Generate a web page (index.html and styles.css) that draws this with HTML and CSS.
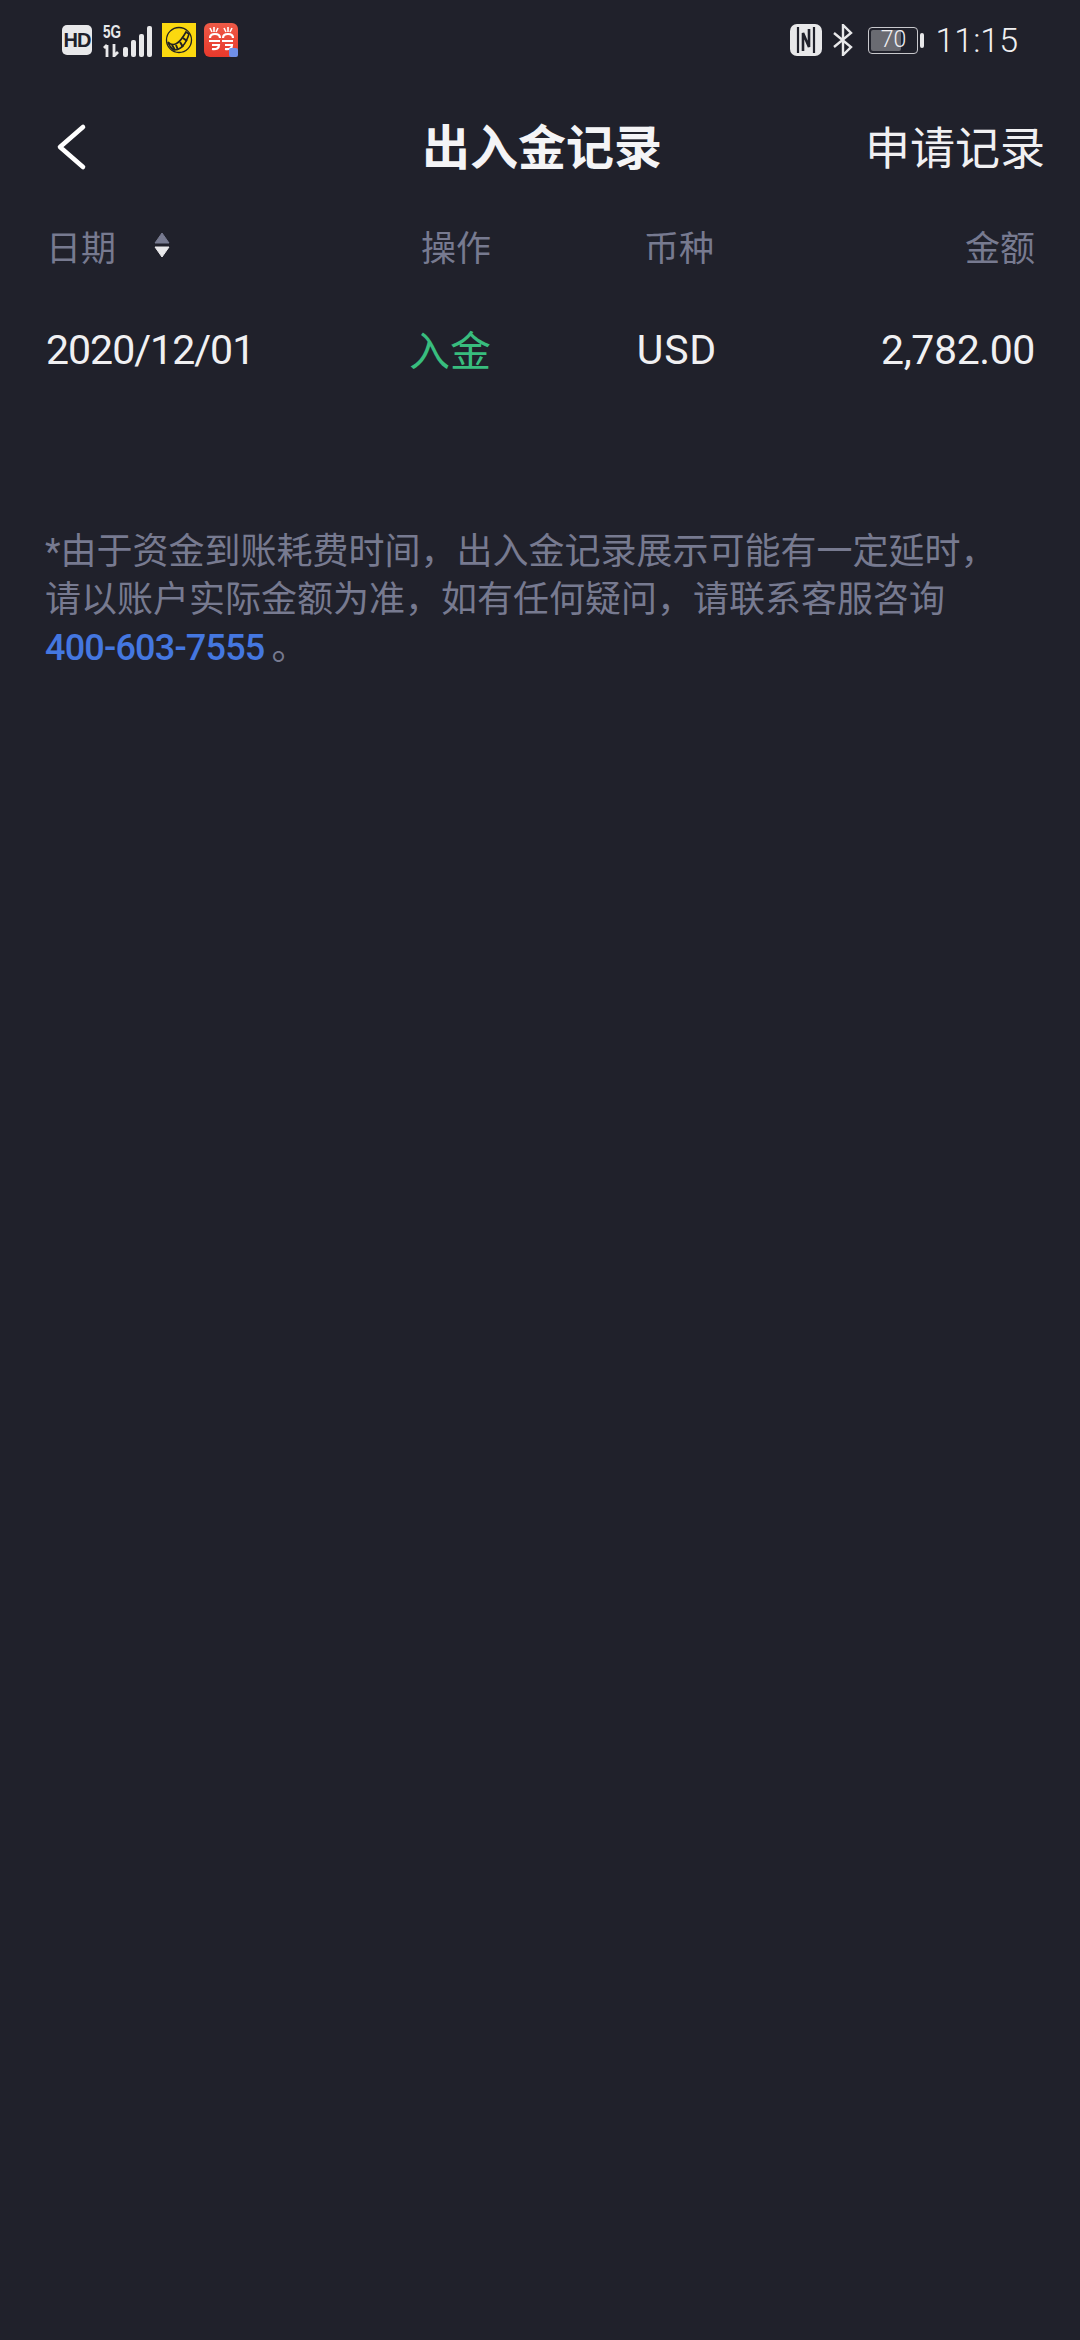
FILE: index.html
```html
<!DOCTYPE html>
<html lang="zh-CN">
<head>
    <meta charset="UTF-8">
    <meta name="viewport" content="width=device-width, initial-scale=1.0">
    <title>出入金记录</title>
    <link rel="stylesheet" href="styles.css">
</head>
<body>
    <div class="status-bar">
        <div class="status-left">
            <span class="hd-badge">HD</span>
            <div class="signal">
                <div class="signal-labels">
                    <span class="net-label">5G</span>
                    <svg class="net-arrows" width="20" height="13" viewBox="0 0 20 13">
                        <path d="M4 1 V13 M1 4 L4 1 M11 0 V12 L15 8" fill="none" stroke="#e8e8ea" stroke-width="2.8"/>
                    </svg>
                </div>
                <div class="signal-bars">
                    <span class="bar bar-1"></span>
                    <span class="bar bar-2"></span>
                    <span class="bar bar-3"></span>
                    <span class="bar bar-4"></span>
                </div>
            </div>
            <svg class="app-icon" width="34" height="34" viewBox="0 0 34 34">
                <rect width="34" height="34" fill="#fbd80f"/>
                <circle cx="17" cy="17" r="12.5" fill="none" stroke="#222" stroke-width="1.3"/>
                <path d="M6 19 Q14 27 24 9 L27 11 Q22 27 12 27 Q8 25 6 19 Z" fill="none" stroke="#222" stroke-width="1.6"/>
                <path d="M10 22 L13 27 M14 22 L16 27 M18 19 L21 24 M21 15 L25 18" stroke="#222" stroke-width="2"/>
            </svg>
            <svg class="app-icon" width="34" height="34" viewBox="0 0 34 34">
                <defs>
                    <linearGradient id="redGrad" x1="0" y1="0" x2="0" y2="1">
                        <stop offset="0" stop-color="#ee5a47"/>
                        <stop offset="1" stop-color="#e8392c"/>
                    </linearGradient>
                </defs>
                <rect width="34" height="34" rx="6" fill="url(#redGrad)"/>
                <path d="M6 15 Q6 11 11 11 Q16 11 16 15 M5 18 H16 M8 22 H15 Q15 27 8 26 M19 15 Q19 11 24 11 Q29 11 29 15 M18 18 H29 M21 22 H28 Q28 27 21 26" fill="none" stroke="#fff" stroke-width="2.2"/>
                <path d="M6 5 L8 9 M10 4 L10 9 M14 5 L12 9 M20 5 L22 9 M24 4 L24 9 M28 5 L26 9" stroke="#fff" stroke-width="1.6"/>
                <rect x="25" y="25" width="9" height="9" rx="2" fill="#6f8fe8"/>
            </svg>
        </div>
        <div class="status-right">
            <svg class="nfc" width="32" height="32" viewBox="0 0 32 32">
                <rect width="32" height="32" rx="7" fill="#e8e8ea"/>
                <path d="M8 3 V29 M24 3 V29" fill="none" stroke="#20212b" stroke-width="2.2"/>
                <path d="M13 27 V9 L19 23 V5" fill="none" stroke="#20212b" stroke-width="2.6"/>
            </svg>
            <svg class="bluetooth" width="20" height="32" viewBox="0 0 20 32">
                <path d="M1 9 L18 23 L10 31 V1 L18 9 L1 23" fill="none" stroke="#e8e8ea" stroke-width="2.4"/>
            </svg>
            <div class="battery">
                <div class="battery-body">
                    <span class="battery-fill"></span>
                    <span class="battery-num">70</span>
                </div>
                <span class="battery-nub"></span>
            </div>
            <span class="clock">11:15</span>
        </div>
    </div>

    <div class="nav-bar">
        <svg class="back-icon" width="32" height="48" viewBox="0 0 32 48">
            <path d="M28 4 L5 24 L28 44" fill="none" stroke="#fff" stroke-width="4.6" stroke-linecap="round" stroke-linejoin="round"/>
        </svg>
        <div class="nav-title">出入金记录</div>
        <div class="nav-action">申请记录</div>
    </div>

    <div class="record-table">
        <div class="record-row record-head">
            <div class="cell-date">日期
                <svg class="sort-icon" width="16" height="26" viewBox="0 0 16 26">
                    <path d="M8 1 L15 11 H1 Z" fill="#777a90" stroke="#777a90" stroke-linejoin="round"/>
                    <path d="M8 25 L15 15 H1 Z" fill="#e8e8ea" stroke="#e8e8ea" stroke-linejoin="round"/>
                </svg>
            </div>
            <div class="cell-right">操作</div>
            <div class="cell-right">币种</div>
            <div class="cell-right">金额</div>
        </div>
        <div class="record-row record-item">
            <div class="cell-date cell-num">2020/12/01</div>
            <div class="cell-right cell-deposit">入金</div>
            <div class="cell-right cell-num cell-code">USD</div>
            <div class="cell-right cell-num cell-amount">2,782.00</div>
        </div>
    </div>

    <p class="note">*由于资金到账耗费时间，出入金记录展示可能有一定延时，<br>请以账户实际金额为准，如有任何疑问，请联系客服咨询<br><span class="phone">400-603-7555</span>。</p>
</body>
</html>
```

FILE: styles.css
```css
html, body {
    margin: 0;
    padding: 0;
}
body {
    width: 1080px;
    height: 2340px;
    overflow: hidden;
    background: #20212b;
    font-family: Roboto, "Noto Sans CJK SC", sans-serif;
    color: #f0f0f2;
}
.status-bar {
    display: flex;
    justify-content: space-between;
    align-items: center;
    height: 80px;
    padding: 0 62px;
    box-sizing: border-box;
}
.status-left, .status-right {
    display: flex;
    align-items: center;
}
.hd-badge {
    width: 30px;
    height: 30px;
    border-radius: 5px;
    background: #e8e8ea;
    color: #20212b;
    font: bold 20px/30px "Liberation Sans", sans-serif;
    text-align: center;
    letter-spacing: -1px;
}
.signal {
    display: flex;
    align-items: flex-end;
    margin-left: 11px;
}
.signal-labels {
    display: flex;
    flex-direction: column;
    align-items: flex-start;
    width: 20px;
}
.net-label {
    font: bold 18px/18px "Liberation Sans", sans-serif;
    color: #e8e8ea;
    margin-bottom: 3px;
    transform: scaleX(0.75);
    transform-origin: left;
}
.net-arrows {
    display: block;
}
.signal-bars {
    display: flex;
    align-items: flex-end;
    gap: 3px;
}
.bar {
    width: 5px;
    border-radius: 2px;
    background: #e8e8ea;
}
.bar-1 { height: 10px; }
.bar-2 { height: 17px; }
.bar-3 { height: 23px; }
.bar-4 { height: 31px; }
.app-icon {
    margin-left: 10px;
}
.app-icon + .app-icon {
    margin-left: 8px;
}
.bluetooth {
    margin-left: 11px;
}
.battery {
    display: flex;
    align-items: center;
    margin-left: 15px;
    gap: 2px;
}
.battery-body {
    position: relative;
    width: 50px;
    height: 27px;
    box-sizing: border-box;
    border: 1.5px solid #c8c8cc;
    border-radius: 4px;
    padding: 2px;
}
.battery-fill {
    display: block;
    width: 68%;
    height: 100%;
    background: #6a6b72;
    border-radius: 2px;
}
.battery-num {
    position: absolute;
    top: 0;
    left: 0;
    right: 0;
    text-align: center;
    font-size: 23px;
    font-weight: 300;
    line-height: 24px;
    color: #f0f0f2;
}
.battery-nub {
    width: 4px;
    height: 15px;
    border-radius: 2px;
    background: #e8e8ea;
}
.clock {
    margin-left: 11px;
    font-size: 34px;
    font-weight: 300;
    color: #f0f0f2;
}
.nav-bar {
    display: grid;
    grid-template-columns: 1fr auto 1fr;
    align-items: center;
    height: 134px;
    padding: 0 35px 0 37px;
}
.back-icon {
    display: block;
    margin-left: 18px;
}
.nav-title {
    font-size: 48px;
    font-weight: bold;
    color: #f4f4f6;
    margin: 0 0 7px 2px;
}
.nav-action {
    justify-self: end;
    font-size: 45px;
    color: #f0f0f2;
    margin-bottom: 3px;
}
.record-table {
    padding: 0 45px 0 46px;
}
.record-row {
    display: grid;
    grid-template-columns: 225px 220px 223px 321px;
    align-items: center;
}
.record-head {
    height: 62px;
    font-size: 35px;
    color: #777a90;
}
.record-item {
    height: 148px;
    font-size: 41px;
    color: #f0f0f2;
}
.cell-num {
    font-size: 41px;
    letter-spacing: -1px;
}
.cell-code {
    letter-spacing: 0.8px;
    padding-right: 0;
    transform: translateX(3px);
}
.cell-amount {
    letter-spacing: -0.4px;
}
.cell-date {
    display: flex;
    align-items: center;
}
.cell-right {
    text-align: right;
}
.cell-deposit {
    color: #38bd7e;
    margin-bottom: 4px;
}
.sort-icon {
    margin-left: 38px;
}
.note {
    margin: 104px 0 0;
    padding: 0 45px;
    font-size: 36px;
    line-height: 48px;
    color: #777a90;
}
.phone {
    color: #4477e0;
    font-weight: 500;
    letter-spacing: -0.8px;
    margin-right: 7px;
}
```
